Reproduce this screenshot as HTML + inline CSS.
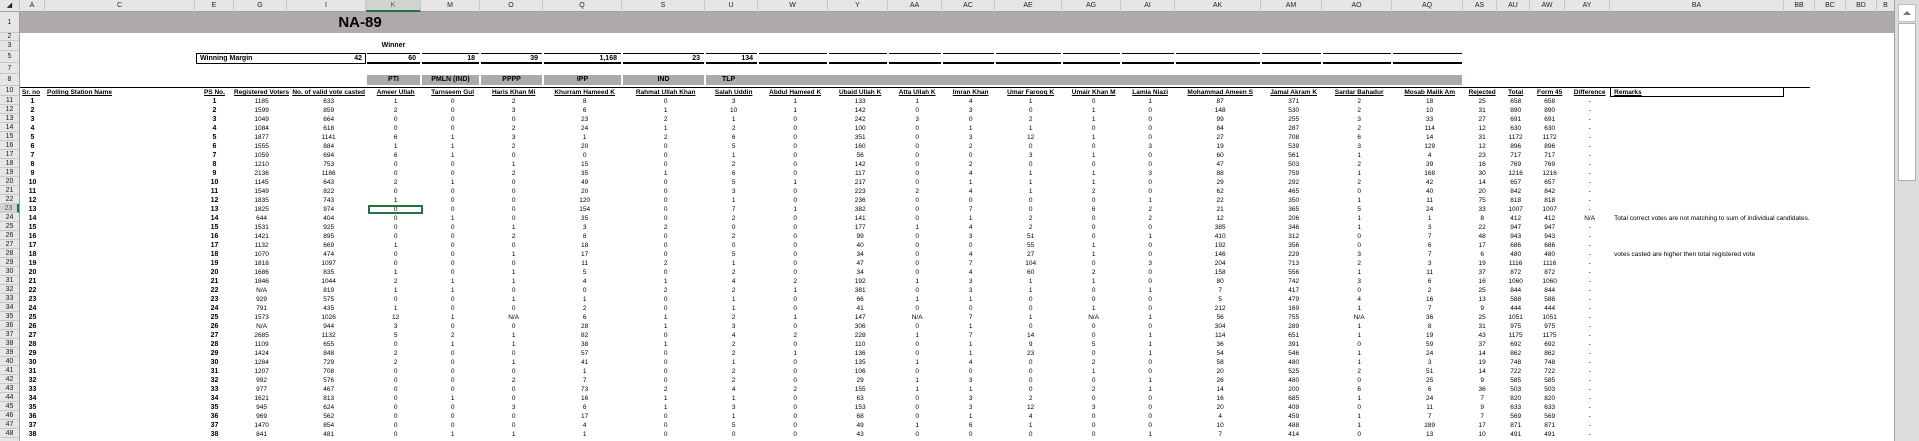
<!DOCTYPE html>
<html><head><meta charset="utf-8"><style>
*{margin:0;padding:0;box-sizing:border-box}
body{width:1919px;height:441px;overflow:hidden;background:#fff;font-family:"Liberation Sans",sans-serif;position:relative;color:#000}
.a{position:absolute}
#ch{left:0;top:0;height:12px;width:1895px;background:#e6e6e6;border-bottom:1px solid #a0a0a0}
#ch div{position:absolute;top:0;height:12px;font-size:7px;line-height:12px;text-align:center;border-right:1px solid #c6c6c6;color:#222}
#rh{left:0;top:12px;width:20px;height:429px;background:#e6e6e6;border-right:1px solid #a0a0a0}
#rh div{position:absolute;left:0;width:19px;font-size:7px;text-align:center;border-bottom:1px solid #c8c8c8;color:#222}
table{position:absolute;left:20px;top:87px;border-collapse:collapse;table-layout:fixed}
td{height:9px;font-size:6.5px;line-height:9px;text-align:center;white-space:nowrap;overflow:hidden;padding:0}
td.b{font-weight:bold;font-size:7px}
td.r{text-align:left;padding-left:2px}
tr.hd td{font-weight:bold;font-size:6.5px;border-top:1px solid #000;text-decoration:underline}
.m5{position:absolute;top:53px;height:11px;border-top:1px solid #000;border-bottom:2px solid #000;font-size:7px;font-weight:bold;text-align:right;padding-right:4px;line-height:9px}
.g8{position:absolute;top:75px;height:10px;background:#aeaaaa;font-size:7px;font-weight:bold;text-align:center;line-height:10px}
</style></head><body>
<div class="a" id="ch">
<div style="left:0;width:20px">◢</div>
<div style="left:20px;width:25px">A</div><div style="left:45px;width:150px">C</div><div style="left:195px;width:39px">E</div><div style="left:234px;width:53px">G</div><div style="left:287px;width:79px">I</div><div style="left:366px;width:55px;background:#d2d2d2;border-bottom:2px solid #217346;color:#217346">K</div><div style="left:421px;width:59px">M</div><div style="left:480px;width:63px">O</div><div style="left:543px;width:79px">Q</div><div style="left:622px;width:83px">S</div><div style="left:705px;width:53px">U</div><div style="left:758px;width:70px">W</div><div style="left:828px;width:60px">Y</div><div style="left:888px;width:54px">AA</div><div style="left:942px;width:53px">AC</div><div style="left:995px;width:67px">AE</div><div style="left:1062px;width:59px">AG</div><div style="left:1121px;width:54px">AI</div><div style="left:1175px;width:86px">AK</div><div style="left:1261px;width:61px">AM</div><div style="left:1322px;width:70px">AO</div><div style="left:1392px;width:71px">AQ</div><div style="left:1463px;width:34px">AS</div><div style="left:1497px;width:33px">AU</div><div style="left:1530px;width:35px">AW</div><div style="left:1565px;width:45px">AY</div><div style="left:1610px;width:174px">BA</div><div style="left:1784px;width:31px">BB</div><div style="left:1815px;width:31px">BC</div><div style="left:1846px;width:31px">BD</div><div style="left:1877px;width:18px">B</div>
</div>
<div class="a" id="rh">
<div style="top:0;height:21px;line-height:21px">1</div><div style="top:21px;height:8px;line-height:8px">2</div><div style="top:29px;height:10px;line-height:10px">3</div><div style="top:39px;height:12px;line-height:12px">5</div><div style="top:51px;height:11px;line-height:11px">7</div><div style="top:62px;height:12px;line-height:12px">8</div><div style="top:74px;height:10px;line-height:10px">10</div>
<div style="top:84px;height:9px;line-height:9px">11</div><div style="top:93px;height:9px;line-height:9px">12</div><div style="top:102px;height:9px;line-height:9px">13</div><div style="top:111px;height:9px;line-height:9px">14</div><div style="top:120px;height:9px;line-height:9px">15</div><div style="top:129px;height:9px;line-height:9px">16</div><div style="top:138px;height:9px;line-height:9px">17</div><div style="top:147px;height:9px;line-height:9px">18</div><div style="top:156px;height:9px;line-height:9px">19</div><div style="top:165px;height:9px;line-height:9px">20</div><div style="top:174px;height:9px;line-height:9px">21</div><div style="top:183px;height:9px;line-height:9px">22</div><div style="top:192px;height:9px;line-height:9px;color:#217346;background:#d2d2d2;border-right:2px solid #217346">23</div><div style="top:201px;height:9px;line-height:9px">24</div><div style="top:210px;height:9px;line-height:9px">25</div><div style="top:219px;height:9px;line-height:9px">26</div><div style="top:228px;height:9px;line-height:9px">27</div><div style="top:237px;height:9px;line-height:9px">28</div><div style="top:246px;height:9px;line-height:9px">29</div><div style="top:255px;height:9px;line-height:9px">30</div><div style="top:264px;height:9px;line-height:9px">31</div><div style="top:273px;height:9px;line-height:9px">32</div><div style="top:282px;height:9px;line-height:9px">33</div><div style="top:291px;height:9px;line-height:9px">34</div><div style="top:300px;height:9px;line-height:9px">35</div><div style="top:309px;height:9px;line-height:9px">36</div><div style="top:318px;height:9px;line-height:9px">37</div><div style="top:327px;height:9px;line-height:9px">38</div><div style="top:336px;height:9px;line-height:9px">39</div><div style="top:345px;height:9px;line-height:9px">40</div><div style="top:354px;height:9px;line-height:9px">41</div><div style="top:363px;height:9px;line-height:9px">42</div><div style="top:372px;height:9px;line-height:9px">43</div><div style="top:381px;height:9px;line-height:9px">44</div><div style="top:390px;height:9px;line-height:9px">45</div><div style="top:399px;height:9px;line-height:9px">46</div><div style="top:408px;height:9px;line-height:9px">47</div><div style="top:417px;height:9px;line-height:9px">48</div>
</div>
<div class="a" style="left:20px;top:12px;width:1874px;height:21px;background:#aeaaaa"></div>
<div class="a" style="left:300px;top:12px;width:120px;height:21px;font-size:15px;font-weight:bold;line-height:21px;text-align:center">NA-89</div>
<div class="a" style="left:366px;top:42px;width:55px;font-size:7px;font-weight:bold;text-align:center">Winner</div>
<div class="a" style="left:196px;top:53px;width:170px;height:11px;border:1px solid #000;font-size:7px;font-weight:bold;line-height:9px;padding:0 3px"><span>Winning Margin</span><span style="float:right">42</span></div>
<div class="m5" style="left:367px;width:53px">60</div><div class="m5" style="left:422px;width:57px">18</div><div class="m5" style="left:481px;width:61px">39</div><div class="m5" style="left:544px;width:77px">1,168</div><div class="m5" style="left:623px;width:81px">23</div><div class="m5" style="left:706px;width:51px">134</div><div class="m5" style="left:759px;width:68px"></div><div class="m5" style="left:829px;width:58px"></div><div class="m5" style="left:889px;width:52px"></div><div class="m5" style="left:943px;width:51px"></div><div class="m5" style="left:996px;width:65px"></div><div class="m5" style="left:1063px;width:57px"></div><div class="m5" style="left:1122px;width:52px"></div><div class="m5" style="left:1176px;width:84px"></div><div class="m5" style="left:1262px;width:59px"></div><div class="m5" style="left:1323px;width:68px"></div><div class="m5" style="left:1393px;width:69px"></div>
<div class="g8" style="left:367px;width:53px">PTI</div><div class="g8" style="left:422px;width:57px">PMLN (IND)</div><div class="g8" style="left:481px;width:61px">PPPP</div><div class="g8" style="left:544px;width:77px">IPP</div><div class="g8" style="left:623px;width:81px">IND</div><div class="g8" style="left:706px;width:756px;text-align:left;padding-left:16px">TLP</div>
<div class="a" style="left:1610px;top:87px;width:174px;height:10px;border:1px solid #000"></div>
<table>
<colgroup><col style="width:25px"><col style="width:150px"><col style="width:39px"><col style="width:53px"><col style="width:79px"><col style="width:55px"><col style="width:59px"><col style="width:63px"><col style="width:79px"><col style="width:83px"><col style="width:53px"><col style="width:70px"><col style="width:60px"><col style="width:54px"><col style="width:53px"><col style="width:67px"><col style="width:59px"><col style="width:54px"><col style="width:86px"><col style="width:61px"><col style="width:70px"><col style="width:71px"><col style="width:34px"><col style="width:33px"><col style="width:35px"><col style="width:45px"><col style="width:174px"></colgroup>
<tr class="hd"><td class="r">Sr. no</td><td class="r">Polling Station Name</td><td>PS No.</td><td>Registered Voters</td><td>No. of valid vote casted</td><td>Ameer Ullah</td><td>Tarnseem Gul</td><td>Haris Khan Mi</td><td>Khurram Hameed K</td><td>Rahmat Ullah Khan</td><td>Salah Uddin</td><td>Abdul Hameed K</td><td>Ubaid Ullah K</td><td>Atta Ullah K</td><td>Imran Khan</td><td>Umar Farooq K</td><td>Umair Khan M</td><td>Lamia Niazi</td><td>Mohammad Ameen S</td><td>Jamal Akram K</td><td>Sardar Bahadur</td><td>Mosab Malik Am</td><td>Rejected</td><td>Total</td><td>Form 45</td><td>Difference</td><td class="r">Remarks</td></tr>
<tr><td class="b">1</td><td></td><td class="b">1</td><td>1185</td><td>633</td><td>1</td><td>0</td><td>2</td><td>8</td><td>0</td><td>3</td><td>1</td><td>133</td><td>1</td><td>4</td><td>1</td><td>0</td><td>1</td><td>87</td><td>371</td><td>2</td><td>18</td><td>25</td><td>658</td><td>658</td><td>-</td><td></td></tr>
<tr><td class="b">2</td><td></td><td class="b">2</td><td>1599</td><td>859</td><td>2</td><td>0</td><td>3</td><td>6</td><td>1</td><td>10</td><td>1</td><td>142</td><td>0</td><td>3</td><td>0</td><td>1</td><td>0</td><td>148</td><td>530</td><td>2</td><td>10</td><td>31</td><td>890</td><td>890</td><td>-</td><td></td></tr>
<tr><td class="b">3</td><td></td><td class="b">3</td><td>1049</td><td>664</td><td>0</td><td>0</td><td>0</td><td>23</td><td>2</td><td>1</td><td>0</td><td>242</td><td>3</td><td>0</td><td>2</td><td>1</td><td>0</td><td>99</td><td>255</td><td>3</td><td>33</td><td>27</td><td>691</td><td>691</td><td>-</td><td></td></tr>
<tr><td class="b">4</td><td></td><td class="b">4</td><td>1084</td><td>618</td><td>0</td><td>0</td><td>2</td><td>24</td><td>1</td><td>2</td><td>0</td><td>100</td><td>0</td><td>1</td><td>1</td><td>0</td><td>0</td><td>84</td><td>287</td><td>2</td><td>114</td><td>12</td><td>630</td><td>630</td><td>-</td><td></td></tr>
<tr><td class="b">5</td><td></td><td class="b">5</td><td>1877</td><td>1141</td><td>6</td><td>1</td><td>3</td><td>1</td><td>2</td><td>6</td><td>0</td><td>351</td><td>0</td><td>3</td><td>12</td><td>1</td><td>0</td><td>27</td><td>708</td><td>6</td><td>14</td><td>31</td><td>1172</td><td>1172</td><td>-</td><td></td></tr>
<tr><td class="b">6</td><td></td><td class="b">6</td><td>1555</td><td>884</td><td>1</td><td>1</td><td>2</td><td>20</td><td>0</td><td>5</td><td>0</td><td>160</td><td>0</td><td>2</td><td>0</td><td>0</td><td>3</td><td>19</td><td>539</td><td>3</td><td>129</td><td>12</td><td>896</td><td>896</td><td>-</td><td></td></tr>
<tr><td class="b">7</td><td></td><td class="b">7</td><td>1059</td><td>694</td><td>6</td><td>1</td><td>0</td><td>0</td><td>0</td><td>1</td><td>0</td><td>56</td><td>0</td><td>0</td><td>3</td><td>1</td><td>0</td><td>60</td><td>561</td><td>1</td><td>4</td><td>23</td><td>717</td><td>717</td><td>-</td><td></td></tr>
<tr><td class="b">8</td><td></td><td class="b">8</td><td>1210</td><td>753</td><td>0</td><td>0</td><td>1</td><td>15</td><td>0</td><td>2</td><td>0</td><td>142</td><td>0</td><td>2</td><td>0</td><td>0</td><td>0</td><td>47</td><td>503</td><td>2</td><td>39</td><td>16</td><td>769</td><td>769</td><td>-</td><td></td></tr>
<tr><td class="b">9</td><td></td><td class="b">9</td><td>2136</td><td>1186</td><td>0</td><td>0</td><td>2</td><td>35</td><td>1</td><td>6</td><td>0</td><td>117</td><td>0</td><td>4</td><td>1</td><td>1</td><td>3</td><td>88</td><td>759</td><td>1</td><td>168</td><td>30</td><td>1216</td><td>1216</td><td>-</td><td></td></tr>
<tr><td class="b">10</td><td></td><td class="b">10</td><td>1145</td><td>643</td><td>2</td><td>1</td><td>0</td><td>49</td><td>0</td><td>5</td><td>1</td><td>217</td><td>0</td><td>1</td><td>1</td><td>1</td><td>0</td><td>29</td><td>292</td><td>2</td><td>42</td><td>14</td><td>657</td><td>657</td><td>-</td><td></td></tr>
<tr><td class="b">11</td><td></td><td class="b">11</td><td>1549</td><td>822</td><td>0</td><td>0</td><td>0</td><td>20</td><td>0</td><td>3</td><td>0</td><td>223</td><td>2</td><td>4</td><td>1</td><td>2</td><td>0</td><td>62</td><td>465</td><td>0</td><td>40</td><td>20</td><td>842</td><td>842</td><td>-</td><td></td></tr>
<tr><td class="b">12</td><td></td><td class="b">12</td><td>1835</td><td>743</td><td>1</td><td>0</td><td>0</td><td>120</td><td>0</td><td>1</td><td>0</td><td>236</td><td>0</td><td>0</td><td>0</td><td>0</td><td>1</td><td>22</td><td>350</td><td>1</td><td>11</td><td>75</td><td>818</td><td>818</td><td>-</td><td></td></tr>
<tr><td class="b">13</td><td></td><td class="b">13</td><td>1825</td><td>974</td><td style="outline:2px solid #217346;outline-offset:-2px">0</td><td>0</td><td>0</td><td>154</td><td>0</td><td>7</td><td>1</td><td>382</td><td>0</td><td>7</td><td>0</td><td>6</td><td>2</td><td>21</td><td>365</td><td>5</td><td>24</td><td>33</td><td>1007</td><td>1007</td><td>-</td><td></td></tr>
<tr><td class="b">14</td><td></td><td class="b">14</td><td>644</td><td>404</td><td>0</td><td>1</td><td>0</td><td>35</td><td>0</td><td>2</td><td>0</td><td>141</td><td>0</td><td>1</td><td>2</td><td>0</td><td>2</td><td>12</td><td>206</td><td>1</td><td>1</td><td>8</td><td>412</td><td>412</td><td>N/A</td><td class="r" style="overflow:visible">Total correct votes are not matching to sum of individual candidates.</td></tr>
<tr><td class="b">15</td><td></td><td class="b">15</td><td>1531</td><td>925</td><td>0</td><td>0</td><td>1</td><td>3</td><td>2</td><td>0</td><td>0</td><td>177</td><td>1</td><td>4</td><td>2</td><td>0</td><td>0</td><td>385</td><td>346</td><td>1</td><td>3</td><td>22</td><td>947</td><td>947</td><td>-</td><td></td></tr>
<tr><td class="b">16</td><td></td><td class="b">16</td><td>1421</td><td>895</td><td>0</td><td>0</td><td>2</td><td>8</td><td>0</td><td>2</td><td>0</td><td>99</td><td>0</td><td>3</td><td>51</td><td>0</td><td>1</td><td>410</td><td>312</td><td>0</td><td>7</td><td>48</td><td>943</td><td>943</td><td>-</td><td></td></tr>
<tr><td class="b">17</td><td></td><td class="b">17</td><td>1132</td><td>669</td><td>1</td><td>0</td><td>0</td><td>18</td><td>0</td><td>0</td><td>0</td><td>40</td><td>0</td><td>0</td><td>55</td><td>1</td><td>0</td><td>192</td><td>356</td><td>0</td><td>6</td><td>17</td><td>686</td><td>686</td><td>-</td><td></td></tr>
<tr><td class="b">18</td><td></td><td class="b">18</td><td>1070</td><td>474</td><td>0</td><td>0</td><td>1</td><td>17</td><td>0</td><td>5</td><td>0</td><td>34</td><td>0</td><td>4</td><td>27</td><td>1</td><td>0</td><td>146</td><td>229</td><td>3</td><td>7</td><td>6</td><td>480</td><td>480</td><td>-</td><td class="r" style="overflow:visible">votes casted are higher then total registered vote</td></tr>
<tr><td class="b">19</td><td></td><td class="b">19</td><td>1818</td><td>1097</td><td>0</td><td>0</td><td>0</td><td>11</td><td>2</td><td>1</td><td>0</td><td>47</td><td>0</td><td>7</td><td>104</td><td>0</td><td>3</td><td>204</td><td>713</td><td>2</td><td>3</td><td>19</td><td>1116</td><td>1116</td><td>-</td><td></td></tr>
<tr><td class="b">20</td><td></td><td class="b">20</td><td>1686</td><td>835</td><td>1</td><td>0</td><td>1</td><td>5</td><td>0</td><td>2</td><td>0</td><td>34</td><td>0</td><td>4</td><td>60</td><td>2</td><td>0</td><td>158</td><td>556</td><td>1</td><td>11</td><td>37</td><td>872</td><td>872</td><td>-</td><td></td></tr>
<tr><td class="b">21</td><td></td><td class="b">21</td><td>1846</td><td>1044</td><td>2</td><td>1</td><td>1</td><td>4</td><td>1</td><td>4</td><td>2</td><td>192</td><td>1</td><td>3</td><td>1</td><td>1</td><td>0</td><td>80</td><td>742</td><td>3</td><td>6</td><td>16</td><td>1060</td><td>1060</td><td>-</td><td></td></tr>
<tr><td class="b">22</td><td></td><td class="b">22</td><td>N/A</td><td>819</td><td>1</td><td>1</td><td>0</td><td>0</td><td>2</td><td>2</td><td>1</td><td>381</td><td>0</td><td>3</td><td>1</td><td>0</td><td>1</td><td>7</td><td>417</td><td>0</td><td>2</td><td>25</td><td>844</td><td>844</td><td>-</td><td></td></tr>
<tr><td class="b">23</td><td></td><td class="b">23</td><td>929</td><td>575</td><td>0</td><td>0</td><td>1</td><td>1</td><td>0</td><td>1</td><td>0</td><td>66</td><td>1</td><td>1</td><td>0</td><td>0</td><td>0</td><td>5</td><td>479</td><td>4</td><td>16</td><td>13</td><td>588</td><td>588</td><td>-</td><td></td></tr>
<tr><td class="b">24</td><td></td><td class="b">24</td><td>791</td><td>435</td><td>1</td><td>0</td><td>0</td><td>2</td><td>0</td><td>1</td><td>0</td><td>41</td><td>0</td><td>0</td><td>0</td><td>1</td><td>0</td><td>212</td><td>169</td><td>1</td><td>7</td><td>9</td><td>444</td><td>444</td><td>-</td><td></td></tr>
<tr><td class="b">25</td><td></td><td class="b">25</td><td>1573</td><td>1026</td><td>12</td><td>1</td><td>N/A</td><td>6</td><td>1</td><td>2</td><td>1</td><td>147</td><td>N/A</td><td>7</td><td>1</td><td>N/A</td><td>1</td><td>56</td><td>755</td><td>N/A</td><td>36</td><td>25</td><td>1051</td><td>1051</td><td>-</td><td></td></tr>
<tr><td class="b">26</td><td></td><td class="b">26</td><td>N/A</td><td>944</td><td>3</td><td>0</td><td>0</td><td>28</td><td>1</td><td>3</td><td>0</td><td>306</td><td>0</td><td>1</td><td>0</td><td>0</td><td>0</td><td>304</td><td>289</td><td>1</td><td>8</td><td>31</td><td>975</td><td>975</td><td>-</td><td></td></tr>
<tr><td class="b">27</td><td></td><td class="b">27</td><td>2685</td><td>1132</td><td>5</td><td>2</td><td>1</td><td>82</td><td>0</td><td>4</td><td>2</td><td>228</td><td>1</td><td>7</td><td>14</td><td>0</td><td>1</td><td>114</td><td>651</td><td>1</td><td>19</td><td>43</td><td>1175</td><td>1175</td><td>-</td><td></td></tr>
<tr><td class="b">28</td><td></td><td class="b">28</td><td>1109</td><td>655</td><td>0</td><td>1</td><td>1</td><td>38</td><td>1</td><td>2</td><td>0</td><td>110</td><td>0</td><td>1</td><td>9</td><td>5</td><td>1</td><td>36</td><td>391</td><td>0</td><td>59</td><td>37</td><td>692</td><td>692</td><td>-</td><td></td></tr>
<tr><td class="b">29</td><td></td><td class="b">29</td><td>1424</td><td>848</td><td>2</td><td>0</td><td>0</td><td>57</td><td>0</td><td>2</td><td>1</td><td>136</td><td>0</td><td>1</td><td>23</td><td>0</td><td>1</td><td>54</td><td>546</td><td>1</td><td>24</td><td>14</td><td>862</td><td>862</td><td>-</td><td></td></tr>
<tr><td class="b">30</td><td></td><td class="b">30</td><td>1284</td><td>729</td><td>2</td><td>0</td><td>1</td><td>41</td><td>0</td><td>1</td><td>0</td><td>135</td><td>1</td><td>4</td><td>0</td><td>2</td><td>0</td><td>58</td><td>480</td><td>1</td><td>3</td><td>19</td><td>748</td><td>748</td><td>-</td><td></td></tr>
<tr><td class="b">31</td><td></td><td class="b">31</td><td>1207</td><td>708</td><td>0</td><td>0</td><td>0</td><td>1</td><td>0</td><td>2</td><td>0</td><td>106</td><td>0</td><td>0</td><td>0</td><td>1</td><td>0</td><td>20</td><td>525</td><td>2</td><td>51</td><td>14</td><td>722</td><td>722</td><td>-</td><td></td></tr>
<tr><td class="b">32</td><td></td><td class="b">32</td><td>992</td><td>576</td><td>0</td><td>0</td><td>2</td><td>7</td><td>0</td><td>2</td><td>0</td><td>29</td><td>1</td><td>3</td><td>0</td><td>0</td><td>1</td><td>26</td><td>480</td><td>0</td><td>25</td><td>9</td><td>585</td><td>585</td><td>-</td><td></td></tr>
<tr><td class="b">33</td><td></td><td class="b">33</td><td>977</td><td>467</td><td>0</td><td>0</td><td>0</td><td>73</td><td>2</td><td>4</td><td>2</td><td>155</td><td>1</td><td>1</td><td>0</td><td>2</td><td>1</td><td>14</td><td>200</td><td>6</td><td>6</td><td>36</td><td>503</td><td>503</td><td>-</td><td></td></tr>
<tr><td class="b">34</td><td></td><td class="b">34</td><td>1621</td><td>813</td><td>0</td><td>1</td><td>0</td><td>16</td><td>1</td><td>1</td><td>0</td><td>63</td><td>0</td><td>3</td><td>2</td><td>0</td><td>0</td><td>16</td><td>685</td><td>1</td><td>24</td><td>7</td><td>820</td><td>820</td><td>-</td><td></td></tr>
<tr><td class="b">35</td><td></td><td class="b">35</td><td>945</td><td>624</td><td>0</td><td>0</td><td>3</td><td>6</td><td>1</td><td>3</td><td>0</td><td>153</td><td>0</td><td>3</td><td>12</td><td>3</td><td>0</td><td>20</td><td>409</td><td>0</td><td>11</td><td>9</td><td>633</td><td>633</td><td>-</td><td></td></tr>
<tr><td class="b">36</td><td></td><td class="b">36</td><td>969</td><td>562</td><td>0</td><td>0</td><td>0</td><td>17</td><td>0</td><td>1</td><td>0</td><td>68</td><td>0</td><td>1</td><td>4</td><td>0</td><td>0</td><td>4</td><td>459</td><td>1</td><td>7</td><td>7</td><td>569</td><td>569</td><td>-</td><td></td></tr>
<tr><td class="b">37</td><td></td><td class="b">37</td><td>1470</td><td>854</td><td>0</td><td>0</td><td>0</td><td>4</td><td>0</td><td>5</td><td>0</td><td>49</td><td>1</td><td>6</td><td>1</td><td>0</td><td>0</td><td>10</td><td>488</td><td>1</td><td>289</td><td>17</td><td>871</td><td>871</td><td>-</td><td></td></tr>
<tr><td class="b">38</td><td></td><td class="b">38</td><td>841</td><td>481</td><td>0</td><td>1</td><td>1</td><td>1</td><td>0</td><td>0</td><td>0</td><td>43</td><td>0</td><td>0</td><td>0</td><td>0</td><td>1</td><td>7</td><td>414</td><td>0</td><td>13</td><td>10</td><td>491</td><td>491</td><td>-</td><td></td></tr>
</table>
<div class="a" style="left:1894px;top:0;width:1px;height:441px;background:#a0a0a0"></div>
<div class="a" style="left:1895px;top:0;width:24px;height:441px;background:#dcdcdc"></div>
<div class="a" style="left:1898px;top:4px;width:18px;height:18px;background:#fff;border:1px solid #c0c0c0"><div style="position:absolute;left:4px;top:6px;width:0;height:0;border-left:4px solid transparent;border-right:4px solid transparent;border-bottom:4px solid #777"></div></div>
<div class="a" style="left:1898px;top:23px;width:18px;height:158px;background:#fff;border:1px solid #b0b0b0"></div>
</body></html>
